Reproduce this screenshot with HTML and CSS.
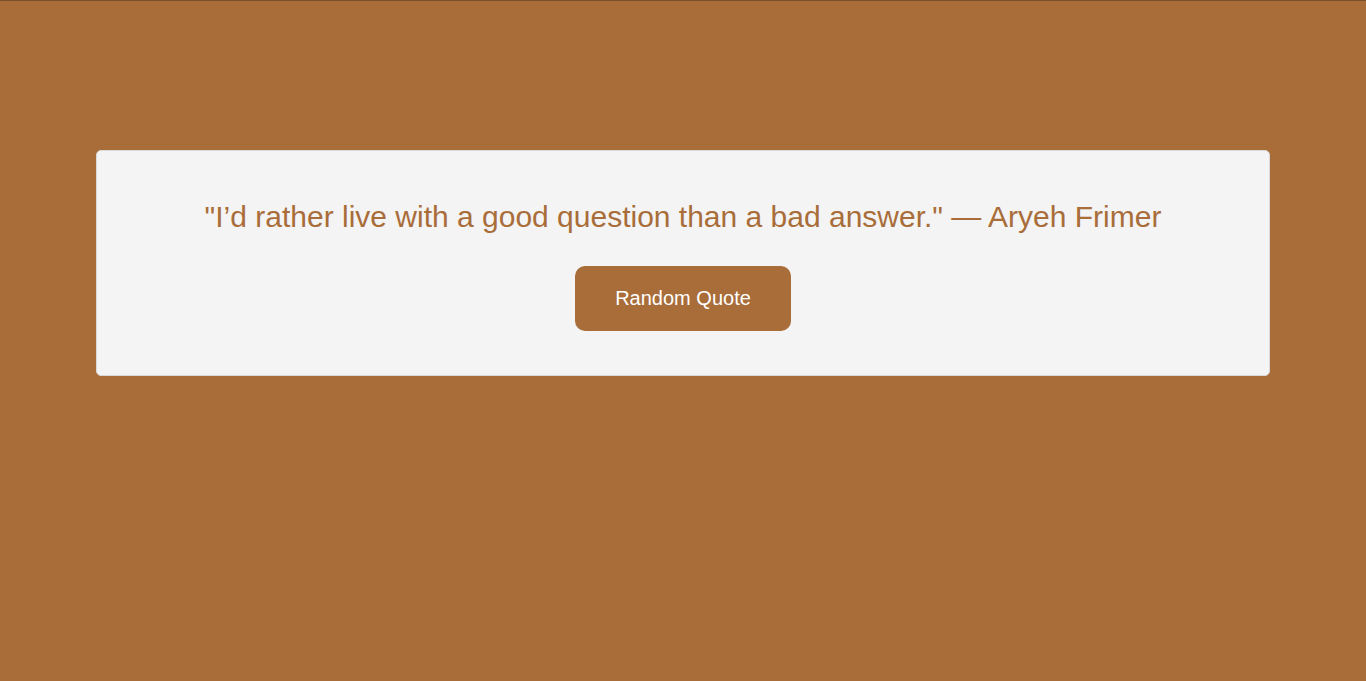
FILE: index.html
```html
<!DOCTYPE html>
<html lang="en">
<head>
<meta charset="utf-8">
<title>Random Quote</title>
<link rel="stylesheet" href="styles.css">
</head>
<body>
<main class="page">
  <section class="quote-box">
    <p class="quote-text">"I’d rather live with a good question than a bad answer." — Aryeh Frimer</p>
    <button class="quote-btn" type="button">Random Quote</button>
  </section>
</main>
</body>
</html>
```

FILE: styles.css
```css
html, body {
  margin: 0;
  padding: 0;
  height: 100%;
}
body {
  background: #a96d3a;
  font-family: "Liberation Sans", Arial, sans-serif;
  border-top: 1px solid #7a4e29;
  box-sizing: border-box;
}
.page {
  padding-top: 149px;
  display: flex;
  justify-content: center;
}
.quote-box {
  width: 86%;
  box-sizing: border-box;
  background: #f4f4f4;
  border: 1px solid #d9d9d9;
  border-radius: 5px;
  padding: 43px 20px 44px;
  display: flex;
  flex-direction: column;
  align-items: center;
}
.quote-text {
  margin: 0 0 26px;
  font-size: 30px;
  line-height: 46px;
  color: #a96d3a;
  text-align: center;
}
.quote-btn {
  background: #a96d3a;
  color: #fff;
  border: none;
  border-radius: 10px;
  font-family: "Liberation Sans", Arial, sans-serif;
  font-size: 20px;
  line-height: 23px;
  padding: 21px 40px;
  cursor: pointer;
}
```
